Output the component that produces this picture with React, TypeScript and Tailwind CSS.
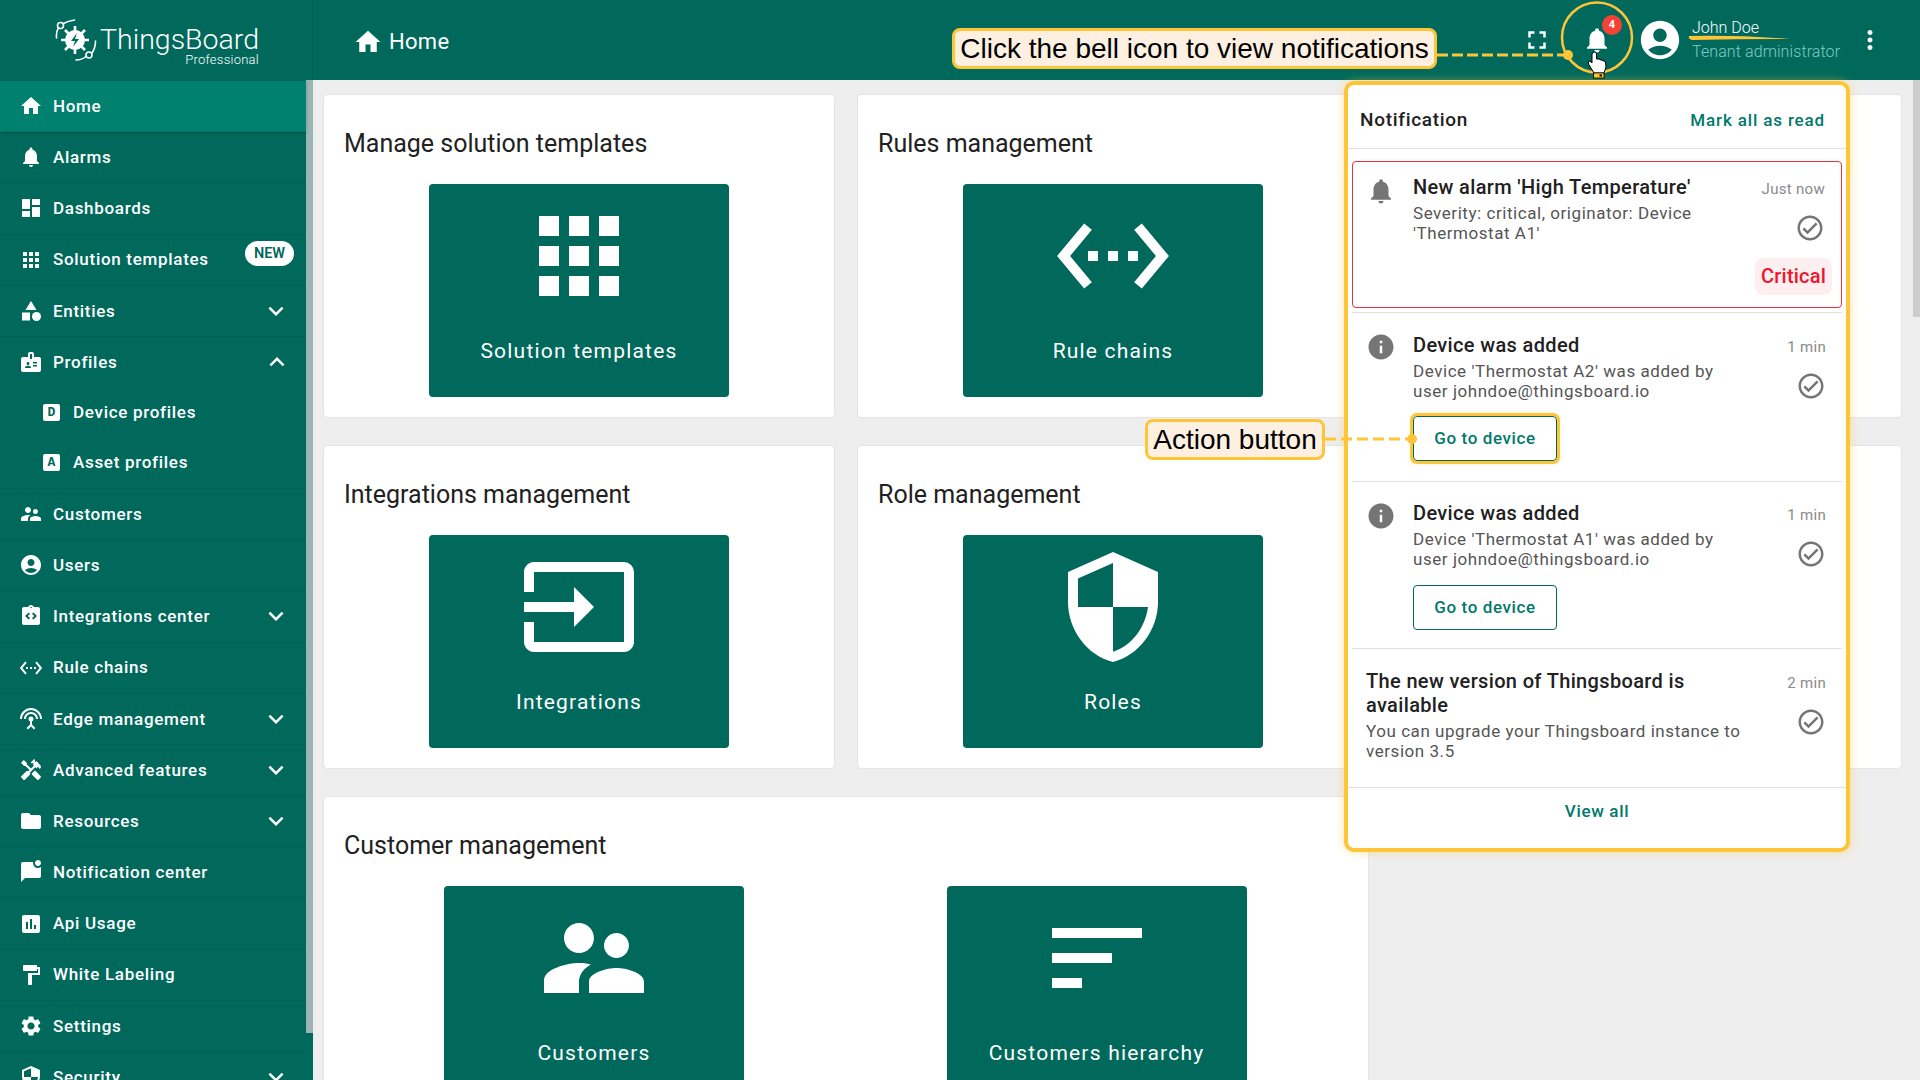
import React from "react";
import {
  MdHome, MdNotifications, MdDashboard, MdApps, MdCategory, MdBadge, MdSupervisorAccount, MdAccountCircle,
  MdIntegrationInstructions, MdSettingsEthernet, MdSettingsInputAntenna, MdHandyman, MdFolder, MdMarkChatUnread,
  MdInsertChart, MdFormatPaint, MdSettings, MdSecurity, MdExpandMore, MdExpandLess, MdFullscreen, MdMoreVert,
  MdInfo, MdOutlineCheckCircle, MdInput, MdSort,
} from "react-icons/md";

type IconT = React.ComponentType<{ size?: number; className?: string }>;

const Logo = () => (
  <svg width="44" height="44" viewBox="0 0 44 44" className="shrink-0" fill="none" stroke="white">
    <circle cx="21" cy="22" r="10" fill="white" stroke="none" />
    <g strokeWidth="2.6">
      <path d="M21 8v5M21 31v5M7 22h5M30 22h5M11 12l4 4M27 28l4 4M31 12l-4 4M15 28l-4 4" />
    </g>
    <path d="M23 15l-6 8h4l-2 6 6-8h-4z" fill="#00695c" stroke="none" />
    <circle cx="6.5" cy="7.5" r="3" strokeWidth="1.6" />
    <circle cx="35" cy="37" r="3" strokeWidth="1.6" />
    <g strokeWidth="1.6" strokeLinecap="round">
      <path d="M2.5 20Q2 14 4.5 10" />
      <path d="M9.5 5.5Q14 3 20.5 2" />
      <path d="M22 42Q28 42 32 38.5" />
      <path d="M38 35Q41.5 30 41.5 23" />
    </g>
  </svg>
);

const LetterIcon = ({ l }: { l: string }) => (
  <span className="w-[17px] h-[17px] rounded-[2px] bg-white text-[#00695c] text-[13px] leading-[17px] font-bold text-center shrink-0 [font-family:'Liberation_Mono',monospace]">
    {l}
  </span>
);

const Row = ({ icon: I, label, chevron, active, badge, last, tall }: { icon: IconT; label: string; chevron?: "down" | "up"; active?: boolean; badge?: boolean; last?: boolean; tall?: boolean }) => (
  <div className={`relative flex items-center shrink-0 pl-[19px] pr-[15px] ${tall ? "h-[51px]" : "h-[51.2px]"} ${last ? "" : "border-b border-black/10"} ${active ? "bg-[#00806f] shadow-[0_1px_3px_rgba(0,0,0,0.25)]" : ""}`}>
    <I size={24} className="shrink-0 text-white" />
    <span className="ml-[10px] mt-px text-white text-[17px] font-medium tracking-[0.7px]">{label}</span>
    {badge && (
      <span className="absolute left-[245px] top-[6px] w-[49px] h-[25px] rounded-full bg-white text-[#00695c] text-[14.5px] leading-[25px] font-semibold text-center">NEW</span>
    )}
    {chevron === "down" && <MdExpandMore size={30} className="ml-auto text-white" />}
    {chevron === "up" && <MdExpandLess size={30} className="ml-auto -mr-[1px] text-white" />}
  </div>
);

const SubRow = ({ l, label }: { l: string; label: string }) => (
  <div className="flex items-center h-[50px] shrink-0 pl-[43px]">
    <LetterIcon l={l} />
    <span className="ml-[13px] text-white text-[17px] font-medium tracking-[0.7px]">{label}</span>
  </div>
);

const Sidebar = () => (
  <aside className="w-[313px] shrink-0 bg-[#00695c] flex overflow-hidden">
    <nav className="w-[306px] shrink-0 flex flex-col pt-px">
      <Row icon={MdHome} label="Home" active />
      <Row icon={MdNotifications} label="Alarms" />
      <Row icon={MdDashboard} label="Dashboards" />
      <Row icon={MdApps} label="Solution templates" badge />
      <Row icon={MdCategory} label="Entities" chevron="down" />
      <Row icon={MdBadge} label="Profiles" chevron="up" last tall />
      <SubRow l="D" label="Device profiles" />
      <div className="border-b border-black/10">
        <SubRow l="A" label="Asset profiles" />
      </div>
      <Row icon={MdSupervisorAccount} label="Customers" />
      <Row icon={MdAccountCircle} label="Users" />
      <Row icon={MdIntegrationInstructions} label="Integrations center" chevron="down" />
      <Row icon={MdSettingsEthernet} label="Rule chains" />
      <Row icon={MdSettingsInputAntenna} label="Edge management" chevron="down" />
      <Row icon={MdHandyman} label="Advanced features" chevron="down" />
      <Row icon={MdFolder} label="Resources" chevron="down" />
      <Row icon={MdMarkChatUnread} label="Notification center" />
      <Row icon={MdInsertChart} label="Api Usage" />
      <Row icon={MdFormatPaint} label="White Labeling" />
      <Row icon={MdSettings} label="Settings" />
      <Row icon={MdSecurity} label="Security" chevron="down" />
    </nav>
    <div className="w-[7px] h-[953px] shrink-0 bg-[#9bb5b3]" />
  </aside>
);

const Tile = ({ icon: I, label }: { icon: IconT; label: string }) => (
  <div className="w-[300px] h-[212.5px] rounded-[4px] bg-[#00695c] text-white flex flex-col items-center pt-[12px] shrink-0">
    <I size={120} className="shrink-0" />
    <span className="mt-[21px] text-[21px] leading-[28px] tracking-[1.2px]">{label}</span>
  </div>
);

const Card = ({ title, icon, label }: { title?: string; icon?: IconT; label?: string }) => (
  <section className="h-[324px] bg-white rounded-[4px] border border-[#e4e4e4] pt-[31px] px-[19px]">
    {title && <h2 className="pl-px text-[25px] leading-[36px] text-[#212121] mb-[22px]">{title}</h2>}
    {icon && label && (
      <div className="flex justify-center">
        <Tile icon={icon} label={label} />
      </div>
    )}
  </section>
);

const Main = () => (
  <main className="flex-1 bg-[#eeeeee] flex overflow-hidden">
    <div className="flex-1 pl-[10px] pt-[14px]">
      <div className="grid grid-cols-[512px_512px_511px] gap-x-[22px] gap-y-[27px]">
        <Card title="Manage solution templates" icon={MdApps} label="Solution templates" />
        <Card title="Rules management" icon={MdSettingsEthernet} label="Rule chains" />
        <Card />
        <Card title="Integrations management" icon={MdInput} label="Integrations" />
        <Card title="Role management" icon={MdSecurity} label="Roles" />
        <Card />
        <section className="col-span-2 h-[400px] bg-white rounded-[4px] border border-[#e4e4e4] pt-[31px] px-[19px]">
          <h2 className="pl-px text-[25px] leading-[36px] text-[#212121] mb-[22px]">Customer management</h2>
          <div className="flex">
            <div className="w-[502px] flex justify-center">
              <Tile icon={MdSupervisorAccount} label="Customers" />
            </div>
            <div className="w-[503px] flex justify-center">
              <Tile icon={MdSort} label="Customers hierarchy" />
            </div>
          </div>
        </section>
      </div>
    </div>
    <div className="w-[7px] h-[237px] shrink-0 bg-[#cdcdcd]" />
  </main>
);

const Header = () => (
  <header className="h-[80px] shrink-0 bg-[#00695c] flex items-center text-white">
    <div className="w-[313px] h-full shrink-0 border-r border-black/10 flex items-center pl-[54px] relative">
      <Logo />
      <div className="ml-[3px] flex flex-col items-end w-[158px] mt-[13px]">
        <span className="text-[28.5px] leading-[26px] font-light">ThingsBoard</span>
        <span className="text-[13px] leading-[14px] font-light tracking-[0.25px]">Professional</span>
      </div>
    </div>
    <div className="ml-[40px] flex items-center mt-[3px]">
      <MdHome size={30} />
      <span className="ml-[6px] text-[22px] tracking-[0.3px]">Home</span>
    </div>
    <div className="ml-auto flex items-center pr-[35px]">
      <MdFullscreen size={30} />
      <div className="relative ml-[30px] w-[30px] h-[30px]">
        <MdNotifications size={30} />
        <span className="absolute left-[20px] -top-[10px] w-[20px] h-[20px] rounded-full bg-[#f44336] text-white text-[11px] leading-[20px] font-bold text-center">4</span>
      </div>
      <MdAccountCircle size={46} className="ml-[25px]" />
      <div className="ml-[9px] w-[163px] flex flex-col pb-px">
        <span className="text-[16px] leading-[20px] font-light">John Doe</span>
        <span className="mt-[4px] text-[16px] leading-[20px] font-light tracking-[0.1px] text-[#80cbc4]">Tenant administrator</span>
      </div>
      <MdMoreVert size={30} />
    </div>
  </header>
);

const RightCol = ({ time, chip }: { time: string; chip?: boolean }) => (
  <div className="ml-auto flex flex-col items-end shrink-0">
    <span className="mt-[4px] h-[20px] text-[15px] leading-[20px] tracking-[0.3px] text-[#8a8a8a]">{time}</span>
    <MdOutlineCheckCircle size={30} className="mt-[14px] text-[#757575]" />
    {chip && (
      <span className="mt-[15px] -mr-[7px] h-[37px] px-[6px] rounded-[8px] bg-[#fdeff0] text-[#f0142f] text-[20px] leading-[37px] font-medium tracking-[0.2px]">Critical</span>
    )}
  </div>
);

const ItemText = ({ title, desc }: { title: string; desc: React.ReactNode }) => (
  <>
    <div className="text-[20px] leading-[24px] font-medium tracking-[0.35px] text-[#212121]">{title}</div>
    <div className="mt-[4px] text-[17px] leading-[20px] tracking-[0.55px] text-[#555555]">{desc}</div>
  </>
);

const GoTo = ({ hi }: { hi?: boolean }) => (
  <div className={`${hi ? "mt-[15px]" : "mt-[16px]"} w-[144px] h-[45px] rounded-[4px] border border-[#00695c] bg-white text-[#00796b] text-[17px] font-medium tracking-[0.6px] flex items-center justify-center ${hi ? "outline-[3px] outline-solid outline-[#fec538] shadow-[0_0_6px_rgba(254,197,56,0.6)]" : ""}`}>
    Go to device
  </div>
);

const Divider = () => <div className="mx-[4px] h-px shrink-0 bg-[#e0e0e0]" />;

const Panel = () => (
  <div className="absolute left-[1344px] top-[81px] w-[506px] h-[771px] rounded-[10px] border-[4px] border-[#fec538] bg-white shadow-[0_0_10px_rgba(254,197,56,0.45)] flex flex-col overflow-hidden">
    <div className="h-[63px] shrink-0 flex items-center justify-between pl-[12px] pr-[21px] pt-[7px] border-b border-[#e0e0e0] mt-px">
      <span className="text-[19px] font-medium tracking-[0.7px] text-[#212121]">Notification</span>
      <span className="text-[17px] font-medium tracking-[0.85px] text-[#00796b]">Mark all as read</span>
    </div>
    <div className="mx-[4px] mt-[12px] h-[147px] shrink-0 rounded-[4px] border border-[#e8303f] flex pl-[13px] pr-[16px] pt-[13px]">
      <MdNotifications size={30} className="text-[#757575] shrink-0 mt-px" />
      <div className="ml-[17px] w-[310px]">
        <ItemText title="New alarm 'High Temperature'" desc={<>Severity: critical, originator: Device<br />'Thermostat A1'</>} />
      </div>
      <RightCol time="Just now" chip />
    </div>
    <div className="h-[4px] shrink-0" />
    <Divider />
    <div className="h-[168px] shrink-0 flex pl-[18px] pr-[20px] pt-[20px]">
      <MdInfo size={30} className="text-[#757575] shrink-0 -mt-[1px]" />
      <div className="ml-[17px] w-[340px]">
        <ItemText title="Device was added" desc={<>Device 'Thermostat A2' was added by<br />user johndoe@thingsboard.io</>} />
        <GoTo hi />
      </div>
      <RightCol time="1 min" />
    </div>
    <Divider />
    <div className="h-[166px] shrink-0 flex pl-[18px] pr-[20px] pt-[19px]">
      <MdInfo size={30} className="text-[#757575] shrink-0" />
      <div className="ml-[17px] w-[340px]">
        <ItemText title="Device was added" desc={<>Device 'Thermostat A1' was added by<br />user johndoe@thingsboard.io</>} />
        <GoTo />
      </div>
      <RightCol time="1 min" />
    </div>
    <Divider />
    <div className="h-[138px] shrink-0 flex pl-[18px] pr-[20px] pt-[20px]">
      <div className="w-[385px]">
        <ItemText title="The new version of Thingsboard is available" desc={<>You can upgrade your Thingsboard instance to<br />version 3.5</>} />
      </div>
      <RightCol time="2 min" />
    </div>
    <div className="h-px shrink-0 bg-[#e0e0e0]" />
    <div className="flex-1 flex items-center justify-center pb-[12px] text-[17px] font-medium tracking-[0.65px] text-[#00796b]">View all</div>
  </div>
);

const Callout = ({ className, children }: { className: string; children: React.ReactNode }) => (
  <div className={`absolute h-[41px] rounded-[8px] border-[3px] border-[#fec538] bg-[#fdf0e0] flex items-center justify-center pt-px text-black text-[28px] whitespace-nowrap [font-family:'Liberation_Sans',sans-serif] ${className}`}>
    {children}
  </div>
);

const Overlay = () => (
  <svg className="absolute inset-0 pointer-events-none" width="1920" height="1080" viewBox="0 0 1920 1080" fill="none">
    <circle cx="1597" cy="37.5" r="35" stroke="#fec538" strokeWidth="2.5" />
    <line x1="1437" y1="55" x2="1566" y2="55" stroke="#fec538" strokeWidth="3" strokeDasharray="11 4" />
    <circle cx="1568" cy="55" r="5" fill="#fec538" />
    <line x1="1325" y1="439" x2="1410" y2="439" stroke="#fec538" strokeWidth="3" strokeDasharray="11 5" />
    <circle cx="1412" cy="439" r="5" fill="#fec538" />
    <path d="M1689 36Q1740 35 1790 39Q1740 39 1692 40Q1688 39 1689 36Z" fill="#fec538" />
    <path d="M1594 73L1588.5 64Q1587.5 61 1590 61L1592 63L1592 54Q1592.5 52 1594.5 52Q1596.5 52 1596.5 54L1596.5 59L1599 59L1601 60L1603 60.500L1605.500 62L1606 67L1604 73Z" fill="white" stroke="black" strokeWidth="1" />
    <rect x="1593.500" y="73" width="10.500" height="5" fill="#fec538" stroke="black" strokeWidth="0.8" />
    <rect x="1599.500" y="74.500" width="2.500" height="2" fill="black" />
  </svg>
);

export default function App() {
  return (
    <div className="relative w-[1920px] h-[1080px] overflow-hidden flex flex-col [font-family:Roboto,sans-serif]">
      <Header />
      <div className="flex-1 flex min-h-0">
        <Sidebar />
        <Main />
      </div>
      <Panel />
      <Overlay />
      <Callout className="left-[952px] top-[28px] w-[485px]">Click the bell icon to view notifications</Callout>
      <Callout className="left-[1145px] top-[419px] w-[180px]">Action button</Callout>
    </div>
  );
}
